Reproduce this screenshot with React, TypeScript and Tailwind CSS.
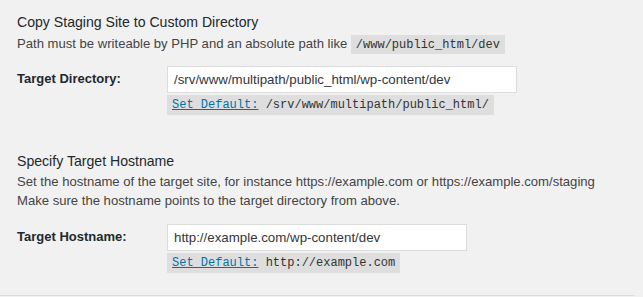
import React from "react";

const sans = { fontFamily: '"Liberation Sans", Arial, sans-serif' };

function Code({ children }: { children: React.ReactNode }) {
  return (
    <code className="bg-[#dedede] text-[#333] px-[5px] pt-[3px] pb-[2px] text-[12px] leading-[15px] whitespace-nowrap [font-family:'Liberation_Mono',monospace]">
      {children}
    </code>
  );
}

function Row({ label, value, def, inputW }: { label: string; value: string; def: string; inputW: string }) {
  return (
    <div className="flex">
      <div className="w-[150px] pt-[5px] text-[13px] leading-[16px] font-bold text-[#23282d]">{label}</div>
      <div className="flex flex-col items-start">
        <div className={`${inputW} h-[27px] bg-white border border-[#dddddd] flex items-center px-[6px] text-[13.3px] text-[#32373c] whitespace-nowrap`}>
          {value}
        </div>
        <div className="mt-[2px] h-[20px] bg-[#dedede] flex items-center px-[5px] text-[12px] text-[#333] whitespace-nowrap [font-family:'Liberation_Mono',monospace]">
          <span className="text-[#0073aa] underline">Set Default:</span>
          <span>&nbsp;{def}</span>
        </div>
      </div>
    </div>
  );
}

export default function App() {
  return (
    <div className="w-[643px] h-[297px] bg-[#f1f1f1] overflow-hidden" style={sans}>
      <div className="w-[635px] h-[296px] border-b border-[#dddddd] pl-[17px] flex flex-col">
        <div className="mt-[13px] text-[14.1px] leading-[18px] text-[#23282d]">Copy Staging Site to Custom Directory</div>
        <div className="mt-[3px] text-[13.1px] leading-[20px] text-[#444]">
          Path must be writeable by PHP and an absolute path like <Code>/www/public_html/dev</Code>
        </div>
        <div className="mt-[12px]">
          <Row
            label="Target Directory:"
            value="/srv/www/multipath/public_html/wp-content/dev"
            def="/srv/www/multipath/public_html/"
            inputW="w-[350px]"
          />
        </div>
        <div className="mt-[37px] text-[14.1px] leading-[18px] text-[#23282d]">Specify Target Hostname</div>
        <div className="mt-[2px] text-[13.1px] leading-[19px] text-[#444]">
          Set the hostname of the target site, for instance https://example.com or https://example.com/staging
        </div>
        <div className="text-[13.1px] leading-[19px] text-[#444]">Make sure the hostname points to the target directory from above.</div>
        <div className="mt-[14px]">
          <Row
            label="Target Hostname:"
            value="http://example.com/wp-content/dev"
            def="http://example.com"
            inputW="w-[300px]"
          />
        </div>
      </div>
    </div>
  );
}
